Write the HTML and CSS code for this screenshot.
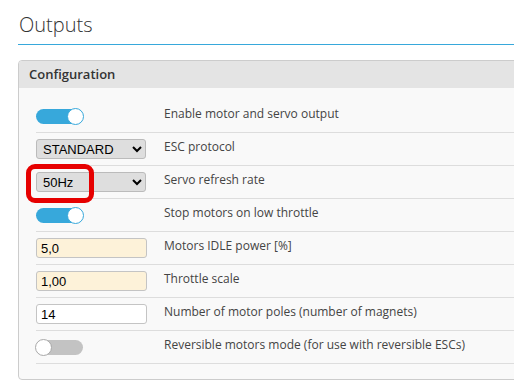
FILE: index.html
```html
<!DOCTYPE html>
<html>

<head>
    <title>Outputs</title>
    <meta charset="UTF-8">

    <link rel="stylesheet" href="styles.css">

</head>

<body>
    <div class="tab">
        <h1 class="tab-title">Outputs</h1>

        <div class="panel">
            <div class="panel-header">Configuration</div>
            <div class="panel-body">
                <div class="row">
                    <div class="control"><span class="toggle on"></span></div>
                    <div class="label">Enable motor and servo output</div>
                </div>
                <div class="row">
                    <div class="control">
                        <select class="dropdown">
                            <option>STANDARD</option>
                        </select>
                    </div>
                    <div class="label">ESC protocol</div>
                </div>
                <div class="row">
                    <div class="control highlighted">
                        <select class="dropdown">
                            <option>50Hz</option>
                        </select>
                    </div>
                    <div class="label">Servo refresh rate</div>
                </div>
                <div class="row">
                    <div class="control"><span class="toggle on"></span></div>
                    <div class="label">Stop motors on low throttle</div>
                </div>
                <div class="row">
                    <div class="control"><input type="text" class="field changed" value="5,0"></div>
                    <div class="label">Motors IDLE power [%]</div>
                </div>
                <div class="row">
                    <div class="control"><input type="text" class="field changed" value="1,00"></div>
                    <div class="label">Throttle scale</div>
                </div>
                <div class="row">
                    <div class="control"><input type="text" class="field" value="14"></div>
                    <div class="label">Number of motor poles (number of magnets)</div>
                </div>
                <div class="row">
                    <div class="control"><span class="toggle"></span></div>
                    <div class="label">Reversible motors mode (for use with reversible ESCs)</div>
                </div>
            </div>
        </div>
    </div>
</body>

</html>
```

FILE: styles.css
```css
html,
body {
    overflow: hidden;
}

body {
    font-family: "Open Sans", sans-serif;
    color: #444;
    margin: 0;
    background: white;
}

.tab {
    padding: 0 0 0 18px;
    width: 520px;
}

.tab-title {
    font-size: 20px;
    font-weight: 300;
    color: #333;
    margin: 0;
    padding: 13px 0 8px 1px;
    line-height: 23px;
    border-bottom: 1px solid #37a8db;
}

.panel {
    margin-top: 15px;
    border: 1px solid #ccc;
    border-radius: 4px;
    background: #f9f9f9;
    overflow: hidden;
}

.panel-header {
    background: #e4e4e4;
    font-size: 13px;
    font-weight: 600;
    color: #333;
    height: 27px;
    line-height: 27px;
    padding-left: 10px;
}

.panel-body {
    padding: 12px 0 15px 17px;
}

.row {
    display: flex;
    align-items: center;
    height: 32px;
    border-bottom: 1px solid #ddd;
}

.control {
    width: 110px;
    margin-right: 18px;
    position: relative;
    display: flex;
    align-items: center;
}

.label {
    font-size: 12px;
    line-height: 16px;
    margin-top: -4px;
}

.toggle {
    display: block;
    position: relative;
    width: 47px;
    height: 15px;
    border-radius: 8px;
    background: #c3c3c3;
}

.toggle::after {
    content: "";
    position: absolute;
    top: -1px;
    left: -1px;
    width: 15px;
    height: 15px;
    border-radius: 50%;
    background: white;
    border: 1px solid #a9a9a9;
}

.toggle.on {
    background: #37a8db;
}

.toggle.on::after {
    left: auto;
    right: -1px;
    border-color: #37a8db;
}

.dropdown {
    width: 110px;
    height: 20px;
    font-family: "Liberation Sans", Arial, sans-serif;
    font-size: 13px;
    color: #000;
    background: #dedede;
    border: 1px solid #bbb;
    border-radius: 3px;
    padding: 0 2px;
}

.field {
    box-sizing: border-box;
    width: 111px;
    height: 20px;
    font-family: "Liberation Sans", Arial, sans-serif;
    font-size: 13px;
    color: #000;
    background: white;
    border: 1px solid #c4c4c4;
    border-radius: 3px;
    padding: 0 4px;
}

.field.changed {
    background: #fdf2d9;
}

.highlighted::after {
    content: "";
    position: absolute;
    left: -10px;
    top: -8px;
    width: 58px;
    height: 29px;
    border: 5px solid #e60000;
    border-radius: 9px;
}
```
